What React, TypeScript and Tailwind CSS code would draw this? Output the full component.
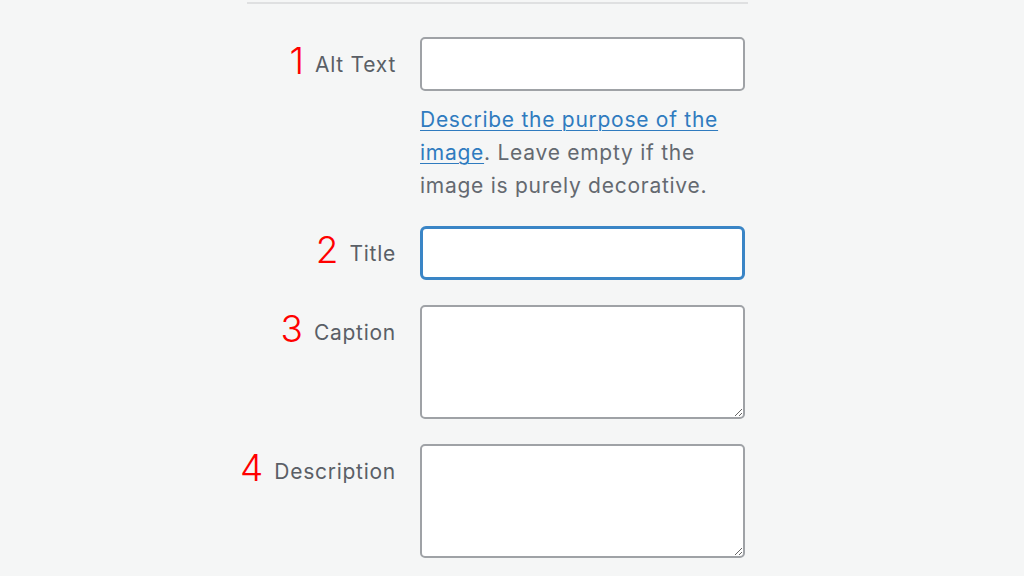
import React from 'react'

const font = { fontFamily: 'Inter, "Open Sans", "Liberation Sans", sans-serif' }

function FieldLabel({ num, text }: { num: string; text: string }) {
  return (
    <div className="flex h-[54px] items-center justify-end pb-2">
      <span className="flex items-baseline gap-[11px]">
        <span className="translate-y-[2px] text-[37px] font-light leading-none text-[#ff0000]">{num}</span>
        <span className="text-[21px] tracking-[0.035em] text-[#5a5f66]">{text}</span>
      </span>
    </div>
  )
}

export default function App() {
  return (
    <div className="min-h-[576px] w-full overflow-hidden bg-[#f5f6f6]" style={font}>
      <div className="ml-[247px] mt-[2px] w-[501px] border-t-2 border-[#dfe0e1]">
        <div className="grid grid-cols-[149px_325px] gap-x-6 pt-[33px]">
          <FieldLabel num="1" text="Alt Text" />
          <div>
            <input
              type="text"
              className="block h-[54px] w-full rounded-[5px] border-2 border-[#9fa2a6] bg-white outline-none"
            />
            <p className="mt-3 text-[21px] leading-[33px] tracking-[0.035em] text-[#646970]">
              <a href="#" className="text-[#2f7bbf] underline decoration-1 underline-offset-[3px]">
                Describe the purpose of the
                <br />
                image
              </a>
              . Leave empty if the
              <br />
              image is purely decorative.
            </p>
          </div>

          <div className="col-span-2 h-6" />

          <FieldLabel num="2" text="Title" />
          <input
            type="text"
            className="block h-[54px] w-full rounded-[6px] border-[3px] border-[#3a85c6] bg-white outline-none"
          />

          <div className="col-span-2 h-[25px]" />

          <FieldLabel num="3" text="Caption" />
          <textarea className="block h-[114px] w-full resize-y rounded-[5px] border-2 border-[#9fa2a6] bg-white outline-none" />

          <div className="col-span-2 h-[25px]" />

          <FieldLabel num="4" text="Description" />
          <textarea className="block h-[114px] w-full resize-y rounded-[5px] border-2 border-[#9fa2a6] bg-white outline-none" />
        </div>
      </div>
    </div>
  )
}
